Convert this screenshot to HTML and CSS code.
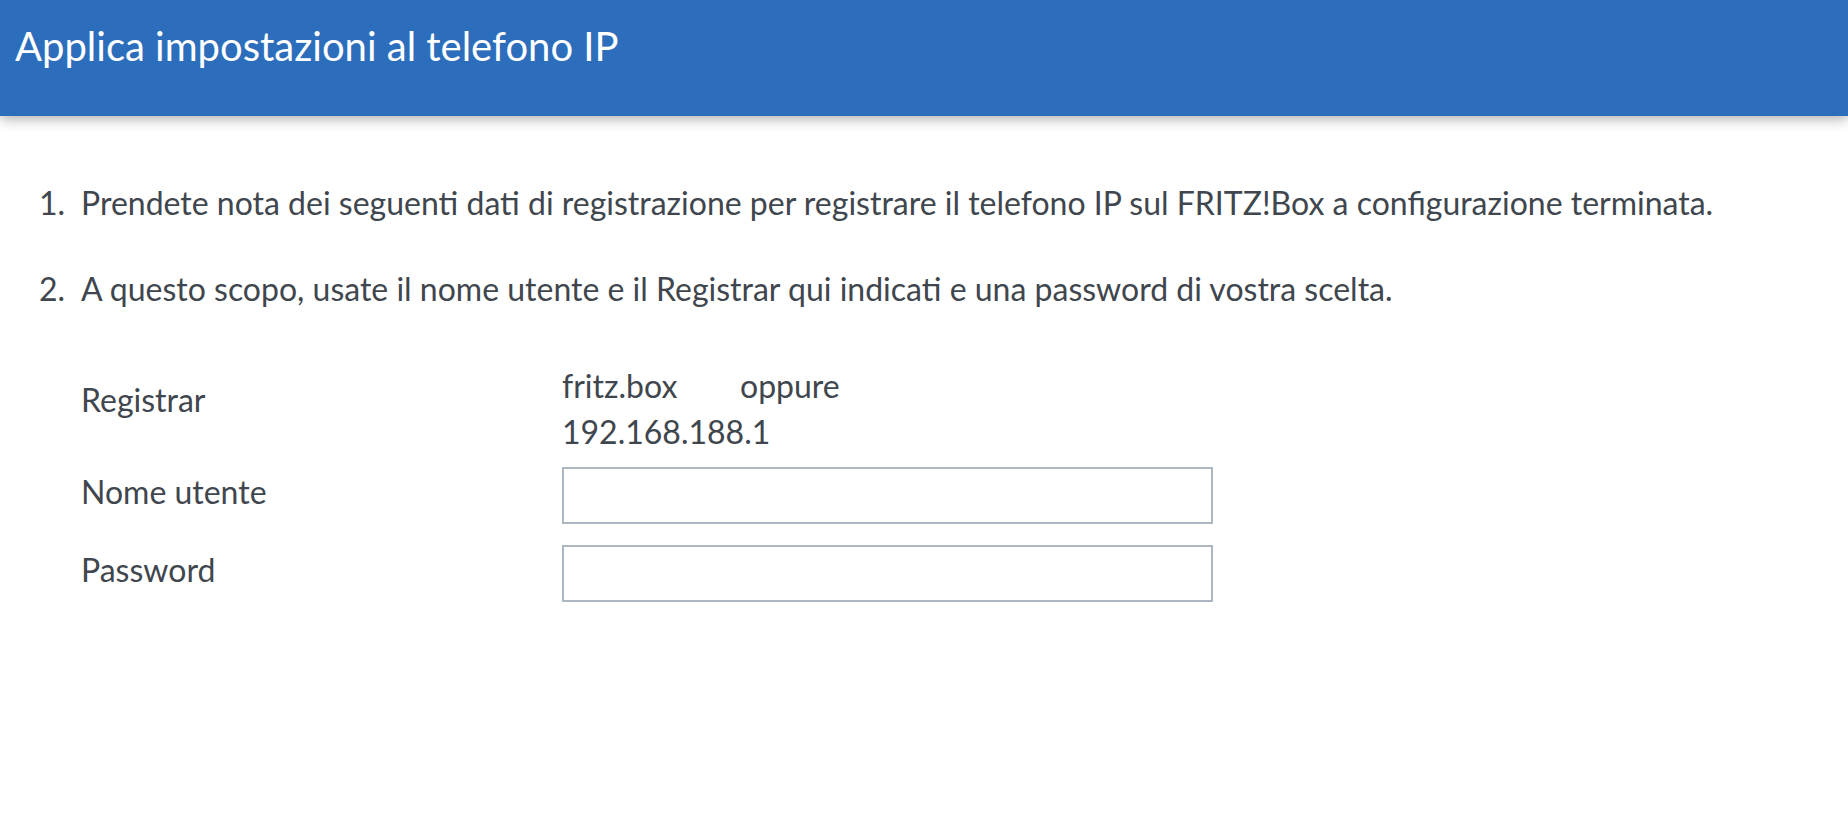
FILE: index.html
```html
<!DOCTYPE html>
<html lang="it">
<head>
<meta charset="utf-8">
<title>Applica impostazioni al telefono IP</title>
<link rel="stylesheet" href="styles.css">
</head>
<body>
<header class="topbar">
  <h1 class="topbar-title">Applica impostazioni al telefono IP</h1>
</header>
<main class="content">
  <ol class="steps">
    <li class="step"><span class="step-num">1.</span><span class="step-text">Prendete nota dei seguenti dati di registrazione per registrare il telefono IP sul FRITZ!Box a configurazione terminata.</span></li>
    <li class="step"><span class="step-num">2.</span><span class="step-text">A questo scopo, usate il nome utente e il Registrar qui indicati e una password di vostra scelta.</span></li>
  </ol>
  <div class="form">
    <div class="row row-registrar">
      <div class="label label-registrar">Registrar</div>
      <div class="value">
        <div class="value-line"><span class="host">fritz.box</span><span>oppure</span></div>
        <div class="value-line">192.168.188.1</div>
      </div>
    </div>
    <div class="row row-input">
      <label class="label label-input" for="user">Nome utente</label>
      <input class="field" id="user" type="text">
    </div>
    <div class="row row-input">
      <label class="label label-input" for="pass">Password</label>
      <input class="field" id="pass" type="password">
    </div>
  </div>
</main>
</body>
</html>
```

FILE: styles.css
```css
* { box-sizing: border-box; }
html, body {
  margin: 0;
  padding: 0;
  background: #ffffff;
}
body {
  font-family: "Lato", "Noto Sans", "Liberation Sans", sans-serif;
  color: #40464d;
  font-size: 32px;
  line-height: 46px;
}
.topbar {
  height: 116px;
  background: #2d6ebc;
  box-shadow: 0 3px 12px rgba(0, 0, 0, 0.32);
  padding: 22px 0 0 15px;
}
.topbar-title {
  margin: 0;
  font-weight: 400;
  font-size: 40px;
  line-height: 48px;
  color: #ffffff;
}
.content {
  padding: 64px 0 0 0;
}
.steps {
  list-style: none;
  margin: 0;
  padding: 0;
}
.step {
  display: flex;
  margin: 0;
}
.step + .step {
  margin-top: 40px;
}
.step-num {
  width: 81px;
  padding-left: 39px;
  flex: none;
}
.form {
  margin-top: 51px;
  padding-left: 81px;
}
.row {
  display: flex;
}
.label {
  width: 481px;
  flex: none;
}
.label-registrar {
  padding-top: 14px;
}
.label-input {
  padding-bottom: 7px;
}
.row-registrar {
  margin-bottom: 12px;
}
.row-input {
  align-items: center;
  margin-bottom: 21px;
}
.host {
  display: inline-block;
  width: 178px;
}
.field {
  width: 651px;
  height: 57px;
  border: 2px solid #adb7c1;
  border-radius: 0;
  background: #ffffff;
  margin: 0;
  padding: 0 12px;
  font: inherit;
  outline: none;
}
```
